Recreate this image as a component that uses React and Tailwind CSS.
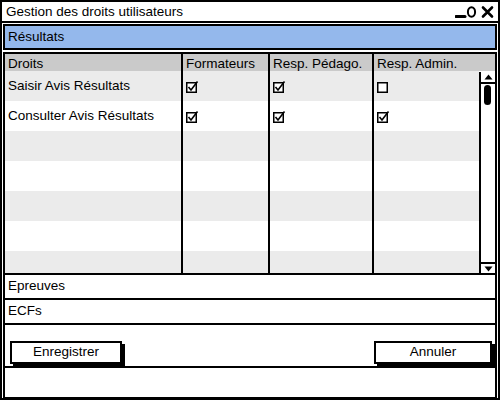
import React from "react";

const rows = [
  { label: "Saisir Avis Résultats", f: true, p: true, a: false },
  { label: "Consulter Avis Résultats", f: true, p: true, a: true },
  null,
  null,
  null,
  null,
  null,
];

function Check({ on }) {
  return (
    <svg width="13" height="13" viewBox="0 0 13 13" className="block">
      <rect x="0.75" y="2.75" width="9.5" height="9.5" fill="white" stroke="black" strokeWidth="1.5" />
      {on && <path d="M2.5 7 L5 10 L11.5 1.5" fill="none" stroke="black" strokeWidth="1.6" />}
    </svg>
  );
}

function Cell({ children, className = "" }) {
  return <div className={"flex items-center px-[3px] " + className}>{children}</div>;
}

export default function App() {
  return (
    <div
      className="w-[500px] h-[400px] bg-white border-2 border-black flex flex-col text-[13.5px] text-black overflow-hidden"
      style={{ fontFamily: '"Liberation Sans", Arial, sans-serif' }}
    >
      {/* Title bar */}
      <div className="h-[21px] flex items-center justify-between pl-[4px] pr-[3px] pt-[1px] border-b-2 border-black shrink-0">
        <span>Gestion des droits utilisateurs</span>
        <svg width="40" height="14" viewBox="0 0 40 14">
          <path d="M1 11.5 H10" stroke="black" strokeWidth="3" strokeLinecap="round" />
          <ellipse cx="16.5" cy="7" rx="3.6" ry="4.8" fill="none" stroke="black" strokeWidth="2" />
          <path d="M28 2.5 L37 11.5 M37 2.5 L28 11.5" stroke="black" strokeWidth="2.6" strokeLinecap="round" />
        </svg>
      </div>

      {/* Accordion header */}
      <div className="h-[26px] mt-[1px] mx-[1px] bg-[#94b8ec] border-2 border-black flex items-center pl-[3px] shrink-0">
        Résultats
      </div>

      {/* Table */}
      <div className="mt-[2px] mx-[1px] border-2 border-black flex flex-col h-[223px] shrink-0 overflow-hidden">
        <div className="grid grid-cols-[178px_87px_104px_1fr] h-[17px] bg-[#cacaca] shrink-0">
          <Cell className="border-r-2 border-black">Droits</Cell>
          <Cell className="border-r-2 border-black">Formateurs</Cell>
          <Cell className="border-r-2 border-black">Resp. Pédago.</Cell>
          <Cell>Resp. Admin.</Cell>
        </div>
        <div className="flex flex-1 overflow-hidden">
          <div className="flex-1 flex flex-col overflow-hidden">
            {rows.map((r, i) => (
              <div
                key={i}
                className={
                  "grid grid-cols-[178px_87px_104px_1fr] h-[30px] shrink-0 " +
                  (i % 2 === 0 ? "bg-[#ebebeb]" : "bg-white")
                }
              >
                <Cell className="border-r-2 border-black">{r ? r.label : ""}</Cell>
                <Cell className="border-r-2 border-black">{r && <Check on={r.f} />}</Cell>
                <Cell className="border-r-2 border-black">{r && <Check on={r.p} />}</Cell>
                <Cell>{r && <Check on={r.a} />}</Cell>
              </div>
            ))}
          </div>
          {/* Scrollbar */}
          <div className="w-[16px] border-l-2 border-black bg-white flex flex-col justify-between shrink-0 mt-[1px]">
            <div className="h-[12px] border-b-2 border-black flex items-center justify-center">
              <svg width="9" height="6" viewBox="0 0 9 6">
                <path d="M0.5 5.5 L4.5 0.5 L8.5 5.5 Z" fill="black" />
              </svg>
            </div>
            <div className="flex-1 relative">
              <div className="absolute left-[3px] top-[1px] w-[7px] h-[20px] rounded-full bg-black" />
            </div>
            <div className="h-[11px] border-t-2 border-black flex items-center justify-center">
              <svg width="9" height="6" viewBox="0 0 9 6">
                <path d="M0.5 0.5 L4.5 5.5 L8.5 0.5 Z" fill="black" />
              </svg>
            </div>
          </div>
        </div>
      </div>

      {/* Collapsed sections */}
      <div className="h-[25px] mx-[1px] border-x-2 border-b-2 border-black flex items-center pl-[3px] shrink-0">
        Epreuves
      </div>
      <div className="h-[25px] mx-[1px] border-x-2 border-b-2 border-black flex items-center pl-[3px] shrink-0">
        ECFs
      </div>

      {/* Buttons */}
      <div className="h-[43px] mx-[1px] border-x-2 border-b-2 border-black flex items-center justify-between pl-[5px] pr-[3px] shrink-0">
        <button className="w-[112px] h-[23px] mt-[14px] border-2 border-black bg-white shadow-[3px_3px_0_0_#000] flex items-center justify-center">
          Enregistrer
        </button>
        <button className="w-[118px] h-[23px] mt-[14px] border-2 border-black bg-white shadow-[3px_3px_0_0_#000] flex items-center justify-center">
          Annuler
        </button>
      </div>

      {/* Status bar */}
      <div className="flex-1 mx-[1px] border-x-2 border-b border-black" />
    </div>
  );
}
